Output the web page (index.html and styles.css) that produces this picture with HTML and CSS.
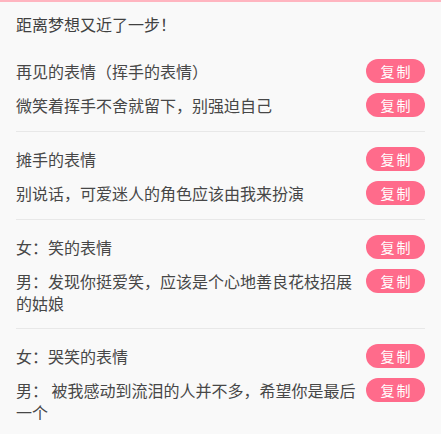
FILE: index.html
```html
<!DOCTYPE html>
<html lang="zh">
<head>
<meta charset="utf-8">
<link rel="stylesheet" href="styles.css">
</head>
<body>
<div class="topbar"></div>
<div class="title">距离梦想又近了一步！</div>
<div class="section">
  <div class="row"><div class="text">再见的表情（挥手的表情）</div><div class="btn">复制</div></div>
  <div class="row"><div class="text">微笑着挥手不舍就留下，别强迫自己</div><div class="btn">复制</div></div>
</div>
<div class="section">
  <div class="row"><div class="text">摊手的表情</div><div class="btn">复制</div></div>
  <div class="row"><div class="text">别说话，可爱迷人的角色应该由我来扮演</div><div class="btn">复制</div></div>
</div>
<div class="section">
  <div class="row"><div class="text">女：笑的表情</div><div class="btn">复制</div></div>
  <div class="row"><div class="text">男：发现你挺爱笑，应该是个心地善良花枝招展的姑娘</div><div class="btn">复制</div></div>
</div>
<div class="section">
  <div class="row"><div class="text">女：哭笑的表情</div><div class="btn">复制</div></div>
  <div class="row"><div class="text">男： 被我感动到流泪的人并不多，希望你是最后一个</div><div class="btn">复制</div></div>
</div>
</body>
</html>
```
FILE: styles.css
```css
html, body {
  margin: 0;
  padding: 0;
  background: #f9f9f9;
  font-family: "Noto Sans CJK SC", "Noto Sans", sans-serif;
  color: #474747;
}
.topbar {
  height: 2px;
  background: #ffb5c0;
}
.title {
  padding: 11px 16px 9px;
  font-size: 16px;
  line-height: 22px;
  color: #404040;
}
.section {
  margin: 0 16px;
  padding: 15px 0 14px;
  border-bottom: 1px solid #e8e8e8;
  display: flex;
  flex-direction: column;
  gap: 10px;
}
.section:last-child {
  border-bottom: none;
}
.row {
  display: flex;
  align-items: flex-start;
  gap: 8px;
}
.text {
  flex: 1;
  min-width: 0;
  font-size: 16px;
  line-height: 22px;
  padding-top: 1px;
}
.btn {
  flex-shrink: 0;
  width: 59px;
  height: 24px;
  border-radius: 12px;
  background: #ff6b8b;
  color: #fff;
  font-size: 14px;
  line-height: 24px;
  text-align: center;
  letter-spacing: 2px;
  text-indent: 2px;
}
```
